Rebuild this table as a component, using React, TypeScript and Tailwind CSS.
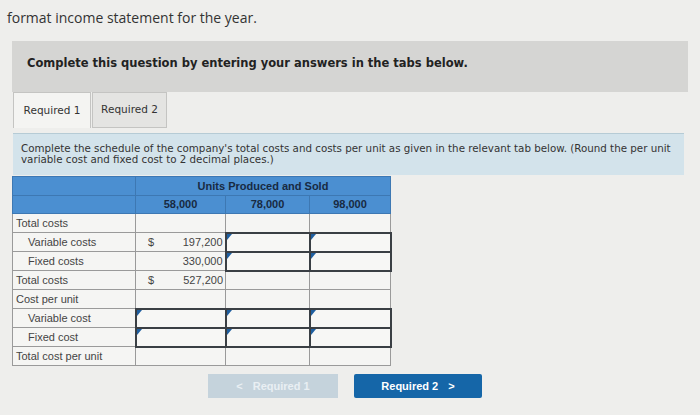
import { ReactNode } from "react";

const Tri = () => (
  <span className="absolute left-0 top-0 w-0 h-0 border-t-[6px] border-t-[#1f5fa0] border-r-[5px] border-r-transparent" />
);

const Cell = ({ input, children, className = "" }: { input?: boolean; children?: ReactNode; className?: string }) =>
  input ? (
    <td className={`relative border-2 border-[#3a3f44] bg-[#f7f7f5] ${className}`}>
      <Tri />
    </td>
  ) : (
    <td className={`border border-[#9a9a9a] ${className}`}>{children}</td>
  );

const rows: { label: string; indent?: boolean; c1?: [string, string]; input?: boolean[] }[] = [
  { label: "Total costs" },
  { label: "Variable costs", indent: true, c1: ["$", "197,200"], input: [false, true, true] },
  { label: "Fixed costs", indent: true, c1: ["", "330,000"], input: [false, true, true] },
  { label: "Total costs", c1: ["$", "527,200"] },
  { label: "Cost per unit" },
  { label: "Variable cost", indent: true, input: [true, true, true] },
  { label: "Fixed cost", indent: true, input: [true, true, true] },
  { label: "Total cost per unit" },
];

export default function App() {
  return (
    <div className="w-[700px] h-[415px] overflow-hidden bg-[#eeeeec] font-['Liberation_Sans',Arial,sans-serif]">
      <p className="pl-[7px] pt-[9px] text-[14px] leading-[18px] text-[#333] font-['Open_Sans',sans-serif]">
        format income statement for the year.
      </p>

      <div className="ml-[12px] mr-[12px] mt-[14px] h-[51px] bg-[#d5d5d3] flex items-center pl-[15px] pb-[5px]">
        <span className="font-['DejaVu_Sans',Verdana,sans-serif] font-bold text-[11.5px] text-[#222]">
          Complete this question by entering your answers in the tabs below.
        </span>
      </div>

      <div className="ml-[13px] flex h-[36px]">
        <div className="w-[78px] border border-b-0 border-[#c4c4c2] bg-[#f4f4f2] flex items-center justify-center text-[10.5px] font-['DejaVu_Sans',Verdana,sans-serif] text-[#333]">
          Required 1
        </div>
        <div className="w-[75px] ml-[1px] border border-[#c4c4c2] bg-[#e4e4e2] flex items-center justify-center text-[10.5px] font-['DejaVu_Sans',Verdana,sans-serif] text-[#333]">
          Required 2
        </div>
      </div>

      <div className="ml-[13px] mr-[16px] mt-[5px] h-[42px] bg-[#d3e3eb] border-t border-[#b6cbd5] pl-[8px] pt-[9px] font-['DejaVu_Sans',Verdana,sans-serif] text-[10.3px] leading-[11px] text-[#333]">
        Complete the schedule of the company's total costs and costs per unit as given in the relevant tab below. (Round the per unit
        <br />
        variable cost and fixed cost to 2 decimal places.)
      </div>

      <table className="ml-[12px] mt-[1px] border-collapse text-[11px] text-[#444] table-fixed w-[378px]">
        <colgroup>
          <col className="w-[123px]" />
          <col className="w-[90px]" />
          <col className="w-[84px]" />
          <col className="w-[81px]" />
        </colgroup>
        <thead>
          <tr className="h-[19px] bg-[#4b8fd1]">
            <th className="border border-[#3d78b3]"></th>
            <th colSpan={3} className="border border-[#3d78b3] font-bold text-[#182a42] text-center">
              Units Produced and Sold
            </th>
          </tr>
          <tr className="h-[18px] bg-[#4b8fd1]">
            <th className="border border-[#3d78b3]"></th>
            <th className="border border-[#3d78b3] font-bold text-[#182a42] text-center">58,000</th>
            <th className="border border-[#3d78b3] font-bold text-[#182a42] text-center">78,000</th>
            <th className="border border-[#3d78b3] font-bold text-[#182a42] text-center">98,000</th>
          </tr>
        </thead>
        <tbody className="bg-[#f5f5f3]">
          {rows.map((r, i) => (
            <tr key={i} className="h-[19px]">
              <td className={`border border-[#9a9a9a] ${r.indent ? "pl-[15px]" : "pl-[3px]"}`}>{r.label}</td>
              {r.input?.[0] ? (
                <Cell input />
              ) : (
                <td className="border border-[#9a9a9a] px-[2px]">
                  {r.c1 && (
                    <div className="flex justify-between pl-[10px]">
                      <span>{r.c1[0]}</span>
                      <span>{r.c1[1]}</span>
                    </div>
                  )}
                </td>
              )}
              <Cell input={r.input?.[1]} />
              <Cell input={r.input?.[2]} />
            </tr>
          ))}
        </tbody>
      </table>

      <div className="flex ml-[208px] mt-[8px] gap-[16px]">
        <div className="w-[130px] h-[24px] bg-[#c5d3dc] flex items-center justify-center gap-[10px] text-[11px] font-bold text-[#e9eff3]">
          <span>&lt;</span>
          <span>Required 1</span>
        </div>
        <div className="w-[128px] h-[24px] bg-[#1566a8] rounded-[2px] flex items-center justify-center gap-[10px] text-[11px] font-bold text-white">
          <span>Required 2</span>
          <span>&gt;</span>
        </div>
      </div>
    </div>
  );
}
